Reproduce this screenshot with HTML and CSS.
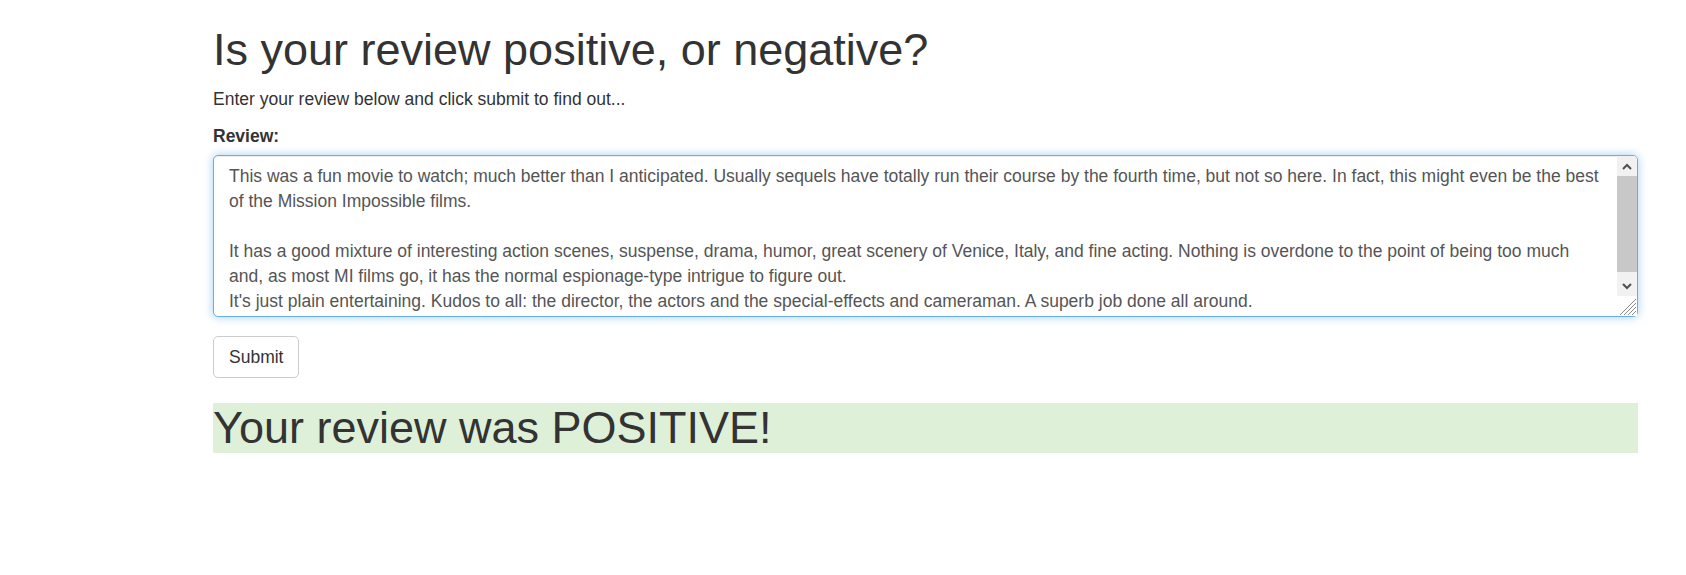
FILE: index.html
```html
<!DOCTYPE html>
<html lang="en">
<head>
<meta charset="utf-8">
<title>Sentiment</title>
<link rel="stylesheet" href="styles.css">
</head>
<body>
<div class="container">
  <h1 class="title">Is your review positive, or negative?</h1>
  <p class="lead-text">Enter your review below and click submit to find out...</p>
  <form class="review-form">
    <div class="form-group">
      <label class="form-label" for="review">Review:</label>
      <div class="textarea-wrap">
        <textarea id="review" class="form-control is-focused" name="review">This was a fun movie to watch; much better than I anticipated. Usually sequels have totally run their course by the fourth time, but not so here. In fact, this might even be the best of the Mission Impossible films.

It has a good mixture of interesting action scenes, suspense, drama, humor, great scenery of Venice, Italy, and fine acting. Nothing is overdone to the point of being too much and, as most MI films go, it has the normal espionage-type intrigue to figure out.
It's just plain entertaining. Kudos to all: the director, the actors and the special-effects and cameraman. A superb job done all around.</textarea>
        <div class="scrollbar" aria-hidden="true">
          <div class="sb-btn">
            <svg width="10" height="7" viewBox="0 0 10 7"><path d="M1 6 L5 2 L9 6" fill="none" stroke="#505050" stroke-width="2"/></svg>
          </div>
          <div class="sb-track"><div class="sb-thumb"></div></div>
          <div class="sb-btn">
            <svg width="10" height="7" viewBox="0 0 10 7"><path d="M1 1 L5 5 L9 1" fill="none" stroke="#505050" stroke-width="2"/></svg>
          </div>
          <div class="sb-corner">
            <svg width="20" height="20" viewBox="0 0 20 20">
              <path d="M19 3 L3 19 M19 7 L7 19 M19 11 L11 19 M19 15 L15 19" stroke="#8a8a8a" stroke-width="1" fill="none"/>
            </svg>
          </div>
        </div>
      </div>
    </div>
    <button type="button" class="btn">Submit</button>
  </form>
  <h1 class="result bg-success">Your review was POSITIVE!</h1>
</div>
<script src="script.js"></script>
</body>
</html>
```

FILE: styles.css
```css
* { box-sizing: border-box; }
html, body { margin: 0; padding: 0; background: #fff; }
body {
  font-family: "Liberation Sans", Arial, Helvetica, sans-serif;
  font-size: 17.5px;
  line-height: 25px;
  color: #333;
}
.container {
  width: 1425px;
  margin-left: 213px;
}
.title, .result {
  font-size: 45px;
  line-height: 49.5px;
  font-weight: 500;
  margin: 25px 0 12.5px;
}
.title { margin-top: 24.5px; }
.lead-text { margin: 0 0 12.5px; }
.review-form { margin: 0; }
.form-group { margin-bottom: 18.75px; }
.form-label {
  display: inline-block;
  font-weight: bold;
  margin-bottom: 6.25px;
}
.textarea-wrap { position: relative; }
.form-control {
  display: block;
  width: 100%;
  height: 162px;
  padding: 7.5px 35px 7.5px 15px;
  font-family: inherit;
  font-size: 17.5px;
  line-height: 25px;
  color: #555;
  background: #fff;
  border: 1px solid #ccc;
  border-radius: 5px;
  resize: none;
  overflow: hidden;
}
.form-control.is-focused,
.form-control:focus {
  border-color: #66afe9;
  outline: 0;
  box-shadow: inset 0 1px 1px rgba(0,0,0,.075), 0 0 10px rgba(102,175,233,.6);
}
.scrollbar {
  position: absolute;
  top: 1px;
  right: 1px;
  bottom: 1px;
  width: 20px;
  display: flex;
  flex-direction: column;
  border-top-right-radius: 4px;
  overflow: hidden;
  pointer-events: none;
}
.sb-btn {
  height: 20px;
  background: #f1f1f1;
  display: flex;
  align-items: center;
  justify-content: center;
}
.sb-track {
  flex: 1;
  background: #f1f1f1;
}
.sb-thumb {
  height: 96px;
  background: #c8c8c8;
}
.sb-corner {
  height: 20px;
  background: #fff;
  display: flex;
}
.btn {
  display: inline-block;
  height: 42px;
  padding: 7.5px 15px;
  font-family: inherit;
  font-size: 17.5px;
  line-height: 25px;
  color: #333;
  background: #fff;
  border: 1px solid #ccc;
  border-radius: 5px;
  cursor: pointer;
}
.bg-success { background-color: #dff0d8; }
```

FILE: script.js
```js
var t = document.getElementById('review');
var marker = 'figure out.';
var idx = t.value.indexOf(marker) + marker.length;
t.focus();
t.setSelectionRange(idx, idx);
t.scrollTop = 0;
```
